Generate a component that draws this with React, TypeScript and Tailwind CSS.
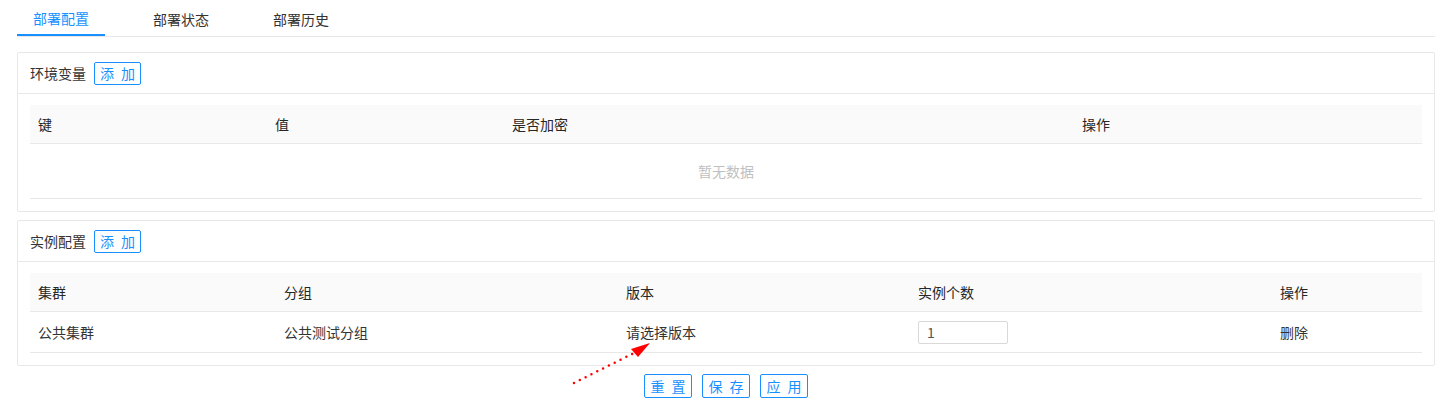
import React from 'react';

const font = { fontFamily: '"Noto Sans CJK SC", "Noto Sans", sans-serif' };

function AddButton({ label }: { label: string }) {
  return (
    <button className="h-[23px] w-[47px] rounded-[2px] border border-[#1890ff] bg-white pl-[2px] text-[14px] leading-[21px] tracking-[2px] text-[#1890ff]">
      {label}
    </button>
  );
}

function Card({ title, children }: { title: string; children: React.ReactNode }) {
  return (
    <div className="rounded-[2px] border border-[#e8e8e8] bg-white">
      <div className="flex h-[41px] items-center gap-[8px] border-b border-[#e8e8e8] px-[12px]">
        <span className="text-[14px] text-[#333]">{title}</span>
        <AddButton label="添 加" />
      </div>
      <div className="px-[12px] pb-[12px] pt-[11px]">{children}</div>
    </div>
  );
}

function HeaderRow({ cols }: { cols: [string, string][] }) {
  return (
    <div className="flex h-[39px] items-center border-b border-[#e8e8e8] bg-[#fafafa] text-[14px] text-[#262626]">
      {cols.map(([label, w]) => (
        <div key={label} className={`${w} px-[8px]`}>
          {label}
        </div>
      ))}
    </div>
  );
}

export default function App() {
  return (
    <div className="relative min-h-[410px] bg-white pl-[17px] pr-[18px]" style={font}>
      {/* tabs */}
      <div className="flex h-[37px] gap-[32px] border-b border-[#e8e8e8] text-[14px]">
        <div className="flex w-[88px] items-center justify-center border-b-2 border-[#1890ff] pt-[2px] text-[#1890ff]">
          部署配置
        </div>
        <div className="flex w-[88px] items-center justify-center pt-[2px] text-[#333]">部署状态</div>
        <div className="flex w-[88px] items-center justify-center pt-[2px] text-[#333]">部署历史</div>
      </div>

      <div className="mt-[15px] flex flex-col gap-[8px]">
        <Card title="环境变量">
          <HeaderRow
            cols={[
              ['键', 'w-[237px]'],
              ['值', 'w-[237px]'],
              ['是否加密', 'w-[570px]'],
              ['操作', 'flex-1'],
            ]}
          />
          <div className="flex h-[55px] items-center justify-center border-b border-[#e8e8e8] text-[14px] text-[#bfbfbf]">
            暂无数据
          </div>
        </Card>

        <Card title="实例配置">
          <HeaderRow
            cols={[
              ['集群', 'w-[246px]'],
              ['分组', 'w-[342px]'],
              ['版本', 'w-[292px]'],
              ['实例个数', 'w-[362px]'],
              ['操作', 'flex-1'],
            ]}
          />
          <div className="flex h-[41px] items-center border-b border-[#e8e8e8] text-[14px] text-[#333]">
            <div className="w-[246px] px-[8px]">公共集群</div>
            <div className="w-[342px] px-[8px]">公共测试分组</div>
            <div className="w-[292px] px-[8px]">请选择版本</div>
            <div className="w-[362px] px-[8px]">
              <input
                defaultValue="1"
                className="h-[23px] w-[90px] rounded-[2px] border border-[#d9d9d9] px-[8px] text-[14px] text-[#555] outline-none"
              />
            </div>
            <div className="flex-1 px-[8px]">删除</div>
          </div>
        </Card>
      </div>

      <div className="mt-[8px] flex justify-center gap-[10px]">
        {['重 置', '保 存', '应 用'].map((t) => (
          <button
            key={t}
            className="h-[24px] w-[48px] rounded-[2px] border border-[#1890ff] bg-white pl-[2px] text-[14px] leading-[22px] tracking-[2px] text-[#1890ff]"
          >
            {t}
          </button>
        ))}
      </div>

      {/* annotation arrow */}
      <svg className="pointer-events-none absolute left-0 top-0" width="1453" height="410">
        <line
          x1="574"
          y1="383"
          x2="634"
          y2="353"
          stroke="#ff0000"
          strokeWidth="2.5"
          strokeLinecap="round"
          strokeDasharray="0 6.5"
        />
        <polygon points="650,343 631,349 638,357" fill="#ff0000" />
      </svg>
    </div>
  );
}
